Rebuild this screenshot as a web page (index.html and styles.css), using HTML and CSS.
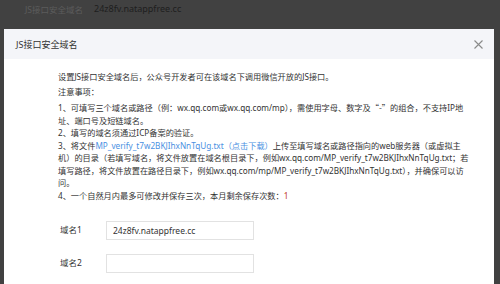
FILE: index.html
```
<!DOCTYPE html>
<html lang="zh-CN">
<head>
  <meta charset="UTF-8">
  <title>JS接口安全域名</title>
  <link rel="stylesheet" href="styles.css">
</head>
<body>
  <div class="page-top">
    <span class="top-label">JS接口安全域名</span>
    <span class="top-value">24z8fv.natappfree.cc</span>
  </div>

  <div class="dialog">
    <div class="dialog-head">
      <h3>JS接口安全域名</h3>
      <svg class="close" width="9" height="9" viewBox="0 0 9 9">
        <path d="M0.5 0.5 L8.5 8.5 M8.5 0.5 L0.5 8.5" stroke="#8a8a8a" stroke-width="1.1" fill="none"/>
      </svg>
    </div>
    <div class="dialog-body">
      <p class="intro">设置JS接口安全域名后，公众号开发者可在该域名下调用微信开放的JS接口。</p>
      <p class="intro">注意事项：</p>
      <p>1、可填写三个域名或路径（例：wx.qq.com或wx.qq.com/mp），需使用字母、数字及<span class="cjk">“-”</span>的组合，不支持IP地址、端口号及短链域名。</p>
      <p>2、填写的域名须通过ICP备案的验证。</p>
      <p>3、将文件<a href="#">MP_verify_t7w2BKJIhxNnTqUg.txt（点击下载）</a>上传至填写域名或路径指向的web服务器（或虚拟主机）的目录（若填写域名，将文件放置在域名根目录下，例如wx.qq.com/MP_verify_t7w2BKJIhxNnTqUg.txt；若填写路径，将文件放置在路径目录下，例如wx.qq.com/mp/MP_verify_t7w2BKJIhxNnTqUg.txt），并确保可以访<br>问。</p>
      <p>4、一个自然月内最多可修改并保存三次，本月剩余保存次数：<span class="count">1</span></p>

      <div class="form">
        <div class="form-row">
          <label>域名1</label>
          <input type="text" value="24z8fv.natappfree.cc">
        </div>
        <div class="form-row">
          <label>域名2</label>
          <input type="text" value="">
        </div>
      </div>
    </div>
  </div>
</body>
</html>
```

FILE: styles.css
```
body {
  margin: 0;
  background-color: #414141;
  font-family: "Noto Sans", "Noto Sans CJK SC", sans-serif;
  color: #333;
  height: 284px;
  overflow: hidden;
}
.page-top {
  height: 17px;
  display: flex;
  align-items: center;
  padding-left: 25px;
  gap: 11px;
  font-size: 8.5px;
}
.top-label {
  color: #5c5c5c;
}
.top-value {
  color: #1e1e1e;
  font-size: 9px;
}
.dialog {
  margin: 12px 6px 0 4px;
  background: white;
  height: 260px;
}
.dialog-head {
  height: 30px;
  background-color: #f4f5f9;
  display: flex;
  align-items: center;
  justify-content: space-between;
  padding: 0 11px 0 12px;
}
.dialog-head h3 {
  margin: 0;
  font-size: 9px;
  font-weight: normal;
  color: #333;
}
.dialog-body {
  padding: 12px 25px 0 54px;
  font-size: 8.2px;
  line-height: 12.5px;
}
.dialog-body p {
  margin: 0;
}
.dialog-body .intro {
  margin-bottom: 2.5px;
}
.dialog-body a {
  color: #4a90e2;
  text-decoration: none;
}
.cjk {
  font-family: "Noto Sans CJK SC", sans-serif;
}
.count {
  color: #c0392b;
}
.form {
  margin-top: 19px;
  padding-left: 2px;
}
.form-row {
  display: flex;
  align-items: center;
  margin-bottom: 14px;
}
.form-row label {
  width: 46px;
  font-size: 8.5px;
}
.form-row input {
  width: 148px;
  height: 19px;
  box-sizing: border-box;
  border: 1px solid #e2e2e2;
  padding: 0 6px;
  font-family: "Noto Sans", "Noto Sans CJK SC", sans-serif;
  font-size: 8.5px;
  color: #333;
  outline: none;
}
```
